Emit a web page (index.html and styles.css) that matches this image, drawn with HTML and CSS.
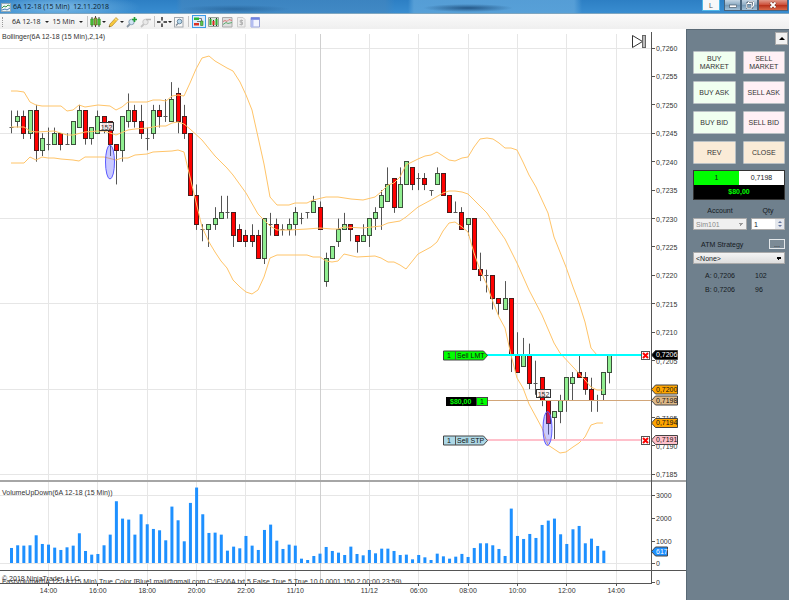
FILE: index.html
```html
<!DOCTYPE html>
<html lang="en">
<head>
<meta charset="utf-8">
<title>6A 12-18 (15 Min) 12.11.2018</title>
<link rel="stylesheet" href="styles.css">
</head>
<body>
<header class="titlebar">
  <svg class="app-icon" width="10" height="10" viewBox="0 0 10 10" aria-hidden="true"><rect x=".5" y="1.5" width="9" height="8" fill="#eef4f4" stroke="#93a9b5"/><path d="M1 6l2-2 2 1 2-2 2 1" fill="none" stroke="#3c9a4c"/><path d="M1 8l3-1 2 1 3-2" fill="none" stroke="#4a7fb8"/></svg>
  <h1 class="title">6A 12-18 (15 Min)&nbsp; 12.11.2018</h1>
  <div class="window-buttons">
    <button class="lang" type="button">L</button>
    <button class="win" type="button" aria-label="Minimize"><svg width="8" height="8" viewBox="0 0 8 8"><rect x=".5" y="4" width="7" height="2.5" fill="#fff" stroke="#4a5d70" stroke-width=".7"/></svg></button>
    <button class="win" type="button" aria-label="Restore"><svg width="8" height="8" viewBox="0 0 8 8"><path d="M2.5 2.5V.8h5v4.5H5.8M.8 2.5h5v4.7h-5z" fill="none" stroke="#4a5d70" stroke-width="1.8"/><path d="M2.5 2.5V.8h5v4.5H5.8M.8 2.5h5v4.7h-5z" fill="none" stroke="#fff"/></svg></button>
    <button class="win close" type="button" aria-label="Close"><svg width="8" height="8" viewBox="0 0 8 8"><path d="M1.5 1.5l5 5M6.5 1.5l-5 5" stroke="#6b2a1e" stroke-width="3"/><path d="M1.5 1.5l5 5M6.5 1.5l-5 5" stroke="#fff" stroke-width="1.8"/></svg></button>
  </div>
</header>

<nav class="toolbar">
  <span class="grip"></span>
  <button class="tool text" type="button">6A 12-18 <i class="caret"></i></button>
  <button class="tool text" type="button">15 Min <i class="caret"></i></button>
  <span class="sep"></span>
  <button class="tool" type="button" aria-label="Chart style"><svg width="11" height="12" viewBox="0 0 11 12"><path d="M2 1v10M5.5 0v11M9 1v10" stroke="#444"/><path d="M.8 3h2.4v6H.8zM7.8 3h2.4v6H7.8z" fill="#4fc43a" stroke="#2b8e22" stroke-width=".7"/><path d="M4.3 2h2.4v7H4.3z" fill="#6cc43a" stroke="#7c4015" stroke-width=".7"/></svg><i class="caret"></i></button>
  <button class="tool" type="button" aria-label="Drawing tools"><svg width="11" height="12" viewBox="0 0 11 12"><path d="M1 11l1-3 6-6.5 2 2L4 10z" fill="#f6c83c" stroke="#b8892b" stroke-width=".7"/><path d="M1 11l.5-1.5 1 1z" fill="#444"/><path d="M7 2.5l2 2" stroke="#fff3c0"/></svg><i class="caret"></i></button>
  <button class="tool" type="button" aria-label="Zoom in"><svg width="12" height="12" viewBox="0 0 12 12"><path d="M1 11l3-3" stroke="#8b98a5" stroke-width="1.8"/><circle cx="5.5" cy="6" r="2.7" fill="#cfe4f2" stroke="#8aa2b5"/><path d="M8.5 1v5M6 3.5h5" stroke="#1f9f38" stroke-width="1.6"/></svg></button>
  <button class="tool" type="button" aria-label="Zoom out"><svg width="12" height="12" viewBox="0 0 12 12"><path d="M1 11l3-3" stroke="#c3c3c3" stroke-width="1.8"/><circle cx="5.5" cy="6" r="2.7" fill="#e9e9e9" stroke="#c8c8c8"/><path d="M6 3.5h5" stroke="#b5b5b5" stroke-width="1.5"/></svg></button>
  <span class="sep"></span>
  <button class="tool" type="button" aria-label="Crosshair"><svg width="10" height="12" viewBox="0 0 10 12"><path d="M5 1v3.5M5 7.5V11M0 6h3.5M6.5 6H10" stroke="#222" stroke-width="1.4"/></svg><i class="caret"></i></button>
  <button class="tool" type="button" aria-label="Data box"><svg width="10" height="12" viewBox="0 0 10 12"><rect x=".5" y="1.5" width="8.5" height="9.5" fill="#f7f7f7" stroke="#a2a8ae"/><circle cx="5.5" cy="5.5" r="2.3" fill="#b8d9ee" stroke="#6d8ca3"/><path d="M2 9.5l2-2" stroke="#7c8994" stroke-width="1.5"/></svg></button>
  <span class="sep wide"></span>
  <button class="tool active" type="button" aria-label="Chart trader"><svg width="10" height="12" viewBox="0 0 10 12"><path d="M0 1.5h5v2.5H0z" fill="#2ab936"/><path d="M0 7h5v2.5H0z" fill="#dc2f24"/><path d="M5 2.5h2.5v7M3 5.5h4" fill="none" stroke="#777"/><path d="M6.5 5h2.5v4.5H6.5z" fill="#5dc94d" stroke="#3a7a30" stroke-width=".6"/></svg></button>
  <button class="tool toggle" type="button" aria-label="Data series"><svg width="11" height="12" viewBox="0 0 11 12"><path d="M.5 1.5h10v9H.5z" fill="#d8e3d8" stroke="#9aa39a"/><path d="M2.5 2v7M8.5 2v8M5.5 4v6" stroke="#333"/><path d="M1.5 3h2v6h-2zM7.5 3h2v6h-2z" fill="#2fae32"/><path d="M4.5 5h2v4h-2z" fill="#df2b1f"/></svg></button>
  <button class="tool toggle" type="button" aria-label="Indicators"><svg width="11" height="12" viewBox="0 0 11 12"><path d="M.5 1.5h9.5v9.5H.5z" fill="#dedede" stroke="#aaa"/><path d="M1 5.5l2-1 2 1 2-2 3 1" fill="none" stroke="#da7776"/><path d="M1 8.5l3-2 2 1 4-1" fill="none" stroke="#5fac72"/></svg></button>
  <button class="tool toggle" type="button" aria-label="Strategies"><svg width="11" height="12" viewBox="0 0 11 12"><path d="M1.5 1.5h5.5l2 2V11H1.5z" fill="#eee" stroke="#ccc"/><path d="M7 4.5H4.2v1.7h2.3V8.5H3.5M5.3 3.5v6" fill="none" stroke="#b2b2b2"/></svg></button>
  <button class="tool toggle" type="button" aria-label="Properties"><svg width="11" height="12" viewBox="0 0 11 12"><path d="M1 1.5h8.5V11H1z" fill="#f3f5ff" stroke="#9aa4d8"/><path d="M1 1.5h8.5v2.3H1z" fill="#6f82e0"/><path d="M1 4h2.5v7H1z" fill="#b3bdf0"/></svg></button>
</nav>

<main class="workspace">
  <section class="chart-area">
    <svg id="chart" class="chart" viewBox="0 29 686 571" role="img" aria-label="6A 12-18 price and volume chart">
      <defs><clipPath id="footer-clip"><rect x="0" y="571" width="650" height="12"/></clipPath></defs>
      <g id="grid"></g>
      <g id="candles"></g>
      <g class="bands">
        <polyline points="11,91 17,91 24,92 30,102 36,105 42,106 61,106 67,111 73,110 79,105 85,107 98,105 110,106 116,110 122,107 128,102 147,102 153,100 160,100 166,101 172,96 178,95 184,96 190,83 196,69 202,58 209,56 215,61 227,68 233,71 240,82 246,95 252,110 258,137 264,164 270,197 277,205 289,205 295,203 307,203 313,200 326,197 338,197 351,199 363,200 375,197 381,192 388,185 394,183 400,177 406,165 412,162 418,159 425,156 431,155 437,152 449,160 455,161 462,158 468,157 474,147 480,139 487,138 493,139 499,143 505,148 511,148 517,150 523,162 529,175 536,187 542,200 548,213 554,237 566,267 573,287 579,303 585,322 591,348 597,355 603,355"/>
        <polyline points="11,127 24,127 30,131 36,132 54,131 67,135 73,135 85,132 98,131 104,131 116,135 128,130 135,129 147,128 159,126 166,126 172,123 178,122 184,124 190,129 202,140 215,156 227,168 233,175 246,193 258,214 270,226 277,230 289,230 307,229 320,228 332,229 338,229 344,227 363,228 381,226 388,223 400,221 406,217 418,207 431,200 443,193 449,191 455,191 462,192 468,194 474,200 480,206 487,213 493,222 505,239 517,263 529,290 542,315 554,343 560,353 573,367 585,380 591,387 597,390 603,390"/>
        <polyline points="11,163 24,163 30,157 36,160 42,157 48,158 54,158 61,159 73,160 79,161 85,157 104,157 116,160 122,158 128,158 135,155 147,154 153,152 172,151 178,150 184,152 190,177 196,202 202,227 209,242 215,252 221,261 227,268 233,280 240,287 246,292 252,294 258,290 264,277 270,258 277,255 307,255 313,257 320,257 326,261 332,262 338,261 344,254 357,257 375,256 381,258 388,262 394,262 400,265 406,269 418,254 431,247 437,242 443,231 449,223 455,222 462,227 468,232 474,253 480,270 487,285 493,302 499,317 505,328 511,355 517,378 523,388 529,404 542,428 548,445 554,449 560,453 566,452 573,447 579,443 585,437 591,425 597,423 603,423"/>
      </g>
      <g id="volume"></g>
      <g id="axes"></g>
      <g id="orders"></g>
      <path class="skip" d="M632.5 35.5v12l10-6z"/><rect class="skip-bar" x="642.5" y="35.5" width="3" height="12"/>
      <text x="2" y="39">Bollinger(6A 12-18 (15 Min),2,14)</text>
      <text x="2" y="495">VolumeUpDown(6A 12-18 (15 Min))</text>
      <text x="2" y="581">© 2018 NinjaTrader, LLC</text>
      <text x="2" y="584" clip-path="url(#footer-clip)">FastVolume(6A 12-18 (15 Min),True,Color [Blue],mail@gmail.com,C:\FV\6A.txt,5,False,True,5,True,10,0,0001,150,2,00:00,23:59)</text>
    </svg>
  </section>

  <aside class="trader">
    <button class="collapse" type="button" aria-label="Collapse"><i class="up"></i></button>
    <div class="orders">
      <button class="buy" type="button">BUY MARKET</button><button class="sell" type="button">SELL MARKET</button>
      <button class="buy" type="button">BUY ASK</button><button class="sell" type="button">SELL ASK</button>
      <button class="buy" type="button">BUY BID</button><button class="sell" type="button">SELL BID</button>
      <button class="flat" type="button">REV</button><button class="flat" type="button">CLOSE</button>
    </div>
    <div class="position">
      <span class="size">1</span><span class="entry">0,7198</span>
      <span class="pnl">$80,00</span>
    </div>
    <div class="account">
      <label for="account">Account</label><label for="qty">Qty</label>
      <select id="account" class="combo" disabled><option>Sim101</option></select>
      <div class="spin"><input id="qty" type="text" value="1"><span class="arrows"><i class="arrow-up"></i><i class="arrow-down"></i></span></div>
    </div>
    <div class="atm"><label for="atm">ATM Strategy</label><button class="more" type="button">...</button></div>
    <select id="atm" class="combo"><option>&lt;None&gt;</option></select>
    <dl class="quotes"><dt>A: 0,7206</dt><dd>102</dd><dt>B: 0,7206</dt><dd>96</dd></dl>
  </aside>
</main>
<script src="chart.js"></script>
</body>
</html>
```
FILE: styles.css
```css
* { box-sizing: border-box; }
body {
  margin: 0;
  background: #fff;
  color: #222;
  font: 7px/9px "Liberation Sans", Arial, sans-serif;
}
button, input, select { font: inherit; color: inherit; margin: 0; padding: 0; border-radius: 0; }

.titlebar {
  display: flex;
  align-items: center;
  height: 14px;
  padding-left: 1px;
  border-bottom: 1px solid #7fa6c0;
  background:
    radial-gradient(ellipse 80px 14px at 60px 7px, rgba(150, 205, 240, .7), transparent),
    radial-gradient(ellipse 55px 4px at 235px 9px, rgba(25, 80, 130, .5), transparent),
    radial-gradient(ellipse 45px 4px at 468px 8px, rgba(20, 65, 110, .75), transparent),
    linear-gradient(90deg, transparent 176px, rgba(70, 135, 190, .6) 182px, rgba(70, 135, 190, .6) 385px, transparent 395px, transparent 408px, rgba(95, 165, 218, .8) 414px, rgba(95, 165, 218, .8) 574px, transparent 582px),
    linear-gradient(#2d7fc4, #398dd0);
}
.title { flex: 1; margin: 0 0 0 2px; font: 7px/12px "Open Sans", "Noto Sans", sans-serif; color: #0c1c2c; }
.window-buttons { display: flex; align-self: flex-start; padding-right: 1px; }
.window-buttons button { height: 11px; border: 1px solid #47637c; border-top: 0; }
.window-buttons .lang { width: 18px; margin-right: 4px; border-color: #4fb8e8; background: #f7f8f9; color: #555; line-height: 9px; }
.window-buttons .win { display: flex; align-items: center; justify-content: center; width: 17px; background: linear-gradient(#c3d5e4, #8aa9c2 50%, #7598b5 50%, #a2c1d8); }
.window-buttons .close { width: 30px; background: linear-gradient(#e09b8c, #cc4d37 50%, #b62e18 50%, #d9694a); }

.toolbar {
  display: flex;
  align-items: center;
  height: 15px;
  padding-left: 2px;
  background: linear-gradient(#fafafa, #efefef);
  font: 7px/12px "Open Sans", "Noto Sans", sans-serif;
}
.grip { width: 1px; height: 10px; margin-right: 9px; border-left: 1px dotted #999; }
.tool { display: flex; align-items: center; gap: 1px; height: 13px; margin-right: 2px; border: 0; background: none; }
.tool.text { gap: 4px; margin-right: 4px; }
.tool.toggle { margin-right: 3px; }
.tool.active { padding: 0 1px; border: 1px solid #3d9be8; background: #dcecfb; }
.sep { width: 1px; height: 11px; margin-right: 2px; background: #c4c4c4; }
.sep.wide { margin: 0 3px 0 2px; }
.caret { border: 2px solid transparent; border-top-color: #222; border-bottom: 0; }

.workspace { display: flex; align-items: stretch; }
.chart-area { flex: 1; min-width: 0; }
.chart { display: block; width: 100%; height: auto; font-size: 7px; }
.chart text { fill: #333; }
.chart .mid { text-anchor: middle; }
.grid { stroke: #e6e6e6; }
.session { stroke: #cfcfcf; }
.axis { stroke: #555; }
.divider { stroke: #a6a6a6; stroke-width: 2; }
.bands { fill: none; stroke: #ffc468; stroke-linejoin: round; }
.wick { stroke: #555; }
.up-bar { fill: #90ee90; stroke: #3c503c; }
.down-bar { fill: #f00; stroke: #4c1c1c; }
.vol { fill: #1e90ff; }
.trade { fill: rgba(80, 80, 255, .3); stroke: #5a5aff; }
.trade-box { fill: rgba(255, 255, 255, .85); stroke: #333; }
.tag { stroke: #444; stroke-width: 1; }
.chart .on-tag { fill: #111; }
.chart .light { fill: #fff; }
.chart .lime { fill: #0f0; font-weight: bold; }
.cancel { fill: #fff; stroke: #555; }
.cross { fill: none; stroke: #f00; stroke-width: 2; }
.skip { fill: #fff; stroke: #333; }
.skip-bar { fill: #bbb; stroke: #666; }

.trader {
  display: flex;
  flex-direction: column;
  width: 103px;
  padding: 2px 4px 0 6px;
  border-left: 1px solid #596975;
  border-top: 1px solid #596975;
  background: #6f808d;
  color: #151a1e;
}
.collapse { align-self: flex-end; display: flex; align-items: center; justify-content: center; width: 13px; height: 13px; margin-right: -3px; border: 1px solid #aaa; background: #f1f1f1; }
.up { border: 3px solid transparent; border-bottom-color: #000; border-top: 0; }
.orders { display: grid; grid-template-columns: 1fr 1fr; gap: 7px; margin-top: 6px; }
.orders button { height: 23px; padding: 0 4px; border: 1px solid #b9c0c4; border-radius: 1px; line-height: 8px; color: #333; }
.orders .buy { background: #f0fff0; }
.orders .sell { background: #fff0f5; }
.orders .flat { background: #faebd7; }
.position { display: grid; grid-template-columns: 1fr 1fr; margin-top: 6px; border: 1px solid #333; line-height: 14px; text-align: center; }
.size { background: #0f0; }
.entry { background: #fff; }
.pnl { grid-column: 1 / 3; background: #000; color: #0f0; font-weight: bold; }
.account { display: grid; grid-template-columns: 54px minmax(0, 1fr); column-gap: 4px; row-gap: 3px; margin-top: 6px; text-align: center; }
.combo { appearance: none; width: 100%; height: 12px; padding: 0 2px; border: 1px solid #aaa; }
#atm { background: linear-gradient(to bottom right, #000 50%, transparent 50%) right 2px center / 3px 3px no-repeat, linear-gradient(to bottom left, #000 50%, transparent 50%) right 5px center / 3px 3px no-repeat, linear-gradient(#f4f4f4, #dedede); }
#account { opacity: 1; color: #8a8a8a; background: linear-gradient(to bottom right, #999 50%, transparent 50%) right 2px center / 3px 3px no-repeat, linear-gradient(to bottom left, #999 50%, transparent 50%) right 5px center / 3px 3px no-repeat, #f0f0f0; }
.spin { display: flex; height: 12px; border: 1px solid #aaa; background: #fff; }
.spin input { flex: 1; width: 100%; min-width: 0; padding: 0 2px; border: 0; background: none; }
.arrows { display: flex; flex: none; flex-direction: column; align-items: center; justify-content: center; gap: 2px; width: 9px; background: #e4e7ec; }
.arrow-up { border: 2px solid transparent; border-bottom-color: #6577a0; border-top: 0; }
.arrow-down { border: 2px solid transparent; border-top-color: #6577a0; border-bottom: 0; }
.atm { display: flex; align-items: center; justify-content: space-between; margin: 9px 0 3px; padding-left: 8px; }
.more { width: 16px; height: 10px; border: 1px solid #e3e7ea; background: #7c8b96; line-height: 5px; }
.quotes { display: grid; grid-template-columns: 50px 1fr; row-gap: 5px; margin: 7px 0 0; padding-left: 12px; }
.quotes dd { margin: 0; }
```
FILE: chart.js
```js
// [type, high, body top, body bottom, low]; prices are in ticks above 0.7100.
const BARS = [
  "d 149 146 146 145","g 149 148 147 146","r 149 148 145 144","g 149 149 145 144","r 150 149 142 140","g 145 144 142 141",
  "d 146 143 143 142","g 146 145 143 143","r 145 145 143 142","d 145 143 143 143","g 147 147 143 143","g 150 149 146 146",
  "r 149 149 144 143","g 146 146 144 143","g 149 148 145 145","r 148 148 146 145","r 147 147 143 141","r 143 143 142 136",
  "g 148 148 142 140","g 152 149 147 146","r 150 149 147 146","r 150 147 145 144","d 146 144 144 142","g 150 149 145 144",
  "r 150 149 148 146","d 151 148 148 147","g 154 151 147 147","r 153 152 147 145","r 150 148 145 144","r 145 145 134 134",
  "r 136 134 129 128","d 129 128 128 126","g 129 129 128 125","g 132 130 129 128","g 134 131 130 130","d 134 131 131 130",
  "r 131 131 127 125","r 129 128 126 126","r 128 127 126 125","r 129 127 126 125","r 128 127 123 123","g 130 130 123 122",
  "d 131 129 129 127","r 130 129 127 127","d 129 128 128 127","g 130 129 128 127","g 132 131 129 127","d 131 130 130 129",
  "d 131 131 131 130","g 134 133 131 131","r 133 132 128 128","g 124 123 119 118","g 125 125 123 123","g 130 128 126 125",
  "g 131 129 128 128","r 129 129 128 126","r 127 127 126 124","g 129 127 126 126","g 130 130 127 125","g 132 131 130 128",
  "g 135 134 132 128","g 139 136 133 133","r 137 137 132 131","g 139 136 132 132","g 140 140 136 136","r 139 139 136 135",
  "d 138 137 137 135","r 138 137 136 135","d 135 135 135 134","g 139 138 136 136","r 138 138 134 134","r 134 134 131 131",
  "d 133 131 131 131","r 132 131 128 128","g 130 130 129 127","r 130 130 121 121","r 124 121 120 119","d 121 120 120 117",
  "r 120 120 116 114","r 116 116 115 113","g 119 116 114 114","r 116 116 106 103","r 110 106 103 103","g 109 106 104 104",
  "r 108 106 101 100","d 105 101 101 99","r 102 102 98 97","r 98 98 94 92","g 96 96 95 91","g 99 98 96 94",
  "g 102 102 98 96","g 103 102 101 98","r 106 103 102 102","r 103 102 100 99","r 102 100 98 96","d 99 98 98 96",
  "g 103 103 99 98","g 106 106 103 101"
];
const VOLUMES = [
  662,780,765,780,1221,838,809,677,574,691,765,1309,530,368,397,780,1250,2721,1956,1912,1250,2147,1706,1500,1441,1000,2485,1882,
  956,2647,3324,2147,1324,1338,1250,544,721,647,1191,765,574,1456,1691,985,618,809,765,191,132,309,412,706,530,456,353,721,397,
  338,574,426,632,632,530,353,368,162,353,250,132,412,294,191,279,400,265,662,868,868,780,618,309,2397,1191,1059,1279,1103,1676,
  1868,1956,1265,838,1485,1632,868,1074,750,544
];

const STEP = 6.17;
const barX = i => 11.5 + i * STEP;
const priceY = ticks => 48 + (160 - ticks) * 5.685;
const snap = v => Math.round(v - 0.5) + 0.5;

function add(parent, name, attrs, text) {
  const el = document.createElementNS("http://www.w3.org/2000/svg", name);
  for (const key in attrs) el.setAttribute(key, attrs[key]);
  if (text !== undefined) el.textContent = text;
  parent.appendChild(el);
  return el;
}
const line = (g, cls, x1, y1, x2, y2) => add(g, "line", { class: cls, x1, y1, x2, y2 });
const layer = id => document.getElementById(id);

// Grid
const grid = layer("grid");
const times = { 6: "14:00", 14: "16:00", 22: "18:00", 30: "20:00", 38: "22:00", 46: "11/10", 58: "11/12", 66: "06:00", 74: "08:00", 82: "10:00", 90: "12:00", 98: "14:00" };
for (let t = 85; t <= 160; t += 15) line(grid, "grid", 0, snap(priceY(t)), 651, snap(priceY(t)));
for (const y of [495.5, 563.5]) line(grid, "grid", 0, y, 651, y);
for (const i in times) line(grid, "grid", snap(barX(+i)), 34, snap(barX(+i)), 583);
line(grid, "session", 320.5, 34, 320.5, 583);

// Candles
const candles = layer("candles");
BARS.forEach((row, i) => {
  const [type, ...values] = row.split(" ");
  const [high, top, bottom, low] = values.map(v => priceY(+v));
  const x = snap(barX(i));
  line(candles, "wick", x, high, x, low);
  if (type === "d") line(candles, "wick", x - 2, snap(top), x + 2, snap(top));
  else add(candles, "rect", { class: type === "g" ? "up-bar" : "down-bar", x: x - 2, y: snap(top), width: 4, height: snap(bottom) - snap(top) });
});

// Volume
const volume = layer("volume");
VOLUMES.forEach((v, i) => {
  const h = v * 0.0227;
  add(volume, "rect", { class: "vol", x: barX(i) - 1.5, y: 563 - h, width: 3, height: h });
});

// Axes
const axes = layer("axes");
line(axes, "divider", 0, 481, 686, 481);
line(axes, "axis", 0, 570.5, 686, 570.5);
line(axes, "axis", 0, 583.5, 652, 583.5);
line(axes, "axis", 651.5, 32, 651.5, 583);
for (let t = 85; t <= 160; t += 5) {
  line(axes, "axis", 651, snap(priceY(t)), 655, snap(priceY(t)));
  add(axes, "text", { x: 656, y: Math.round(priceY(t)) + 3 }, "0,7" + (100 + t));
}
for (const [label, y] of [["3000", 495], ["2000", 518], ["1000", 541], ["0", 563], ["0", 582]]) {
  line(axes, "axis", 651, y + 0.5, 655, y + 0.5);
  add(axes, "text", { x: 656, y: y + 3 }, label);
}
for (const i in times) {
  line(axes, "axis", snap(barX(+i)), 583, snap(barX(+i)), 586);
  add(axes, "text", { class: "mid", x: barX(+i), y: 593 }, times[i]);
}

// Orders, price markers and trades
const orders = layer("orders");
function marker(y, label, fill, textClass = "on-tag", width = 26) {
  add(orders, "path", { class: "tag", fill, d: `M651.5 ${y}l4-4.5h${width - 4}v9h${4 - width}z` });
  add(orders, "text", { x: 656, y: Math.round(y + 2), class: textClass }, label);
}
function orderLine(y, color, label, fill) {
  add(orders, "rect", { x: 486, y: y - 1, width: 156, height: 2, fill: color });
  add(orders, "path", { class: "tag", fill, d: `M443.5 ${y - 4}h40l4 4.5-4 4.5h-40z` });
  line(orders, "wick", 455.5, y - 4, 455.5, y + 5);
  add(orders, "text", { class: "on-tag", x: 447, y: y + 3 }, "1");
  add(orders, "text", { class: "on-tag", x: 457, y: y + 3 }, label);
  add(orders, "rect", { class: "cancel", x: 641.5, y: y - 3.5, width: 8, height: 8 });
  add(orders, "path", { class: "cross", d: `M643 ${y - 2}l5 5m0-5l-5 5` });
}
orderLine(355, "#0ff", "Sell LMT", "#0f0");
orderLine(440, "#ffc0cb", "Sell STP", "#add8e6");
add(orders, "rect", { x: 487, y: 400, width: 165, height: 1, fill: "#d2a679" });
add(orders, "rect", { x: 446, y: 397, width: 30, height: 9, fill: "#000" });
add(orders, "rect", { class: "tag", x: 476.5, y: 397.5, width: 11, height: 8, fill: "#0f0" });
add(orders, "text", { x: 450, y: 404, class: "lime" }, "$80,00");
add(orders, "text", { class: "on-tag", x: 480, y: 404 }, "1");
marker(355, "0,7206", "#000", "light");
marker(389.5, "0,7200", "#ffa500");
marker(400.5, "0,7198", "#deb887");
marker(423, "0,7194", "#ffa500");
marker(440, "0,7191", "#ffc0cb");
marker(551.5, "617", "#1e90ff", "light", 16);
for (const [cx, cy, bx, by] of [[110, 162, 99.5, 122.5], [547.5, 428.5, 536.5, 389.5]]) {
  add(orders, "ellipse", { class: "trade", cx, cy, rx: 4.5, ry: 17 });
  add(orders, "rect", { class: "trade-box", x: bx, y: by, width: 14, height: 8 });
  add(orders, "text", { class: "mid", x: bx + 7, y: by + 7 }, "152");
}
```
